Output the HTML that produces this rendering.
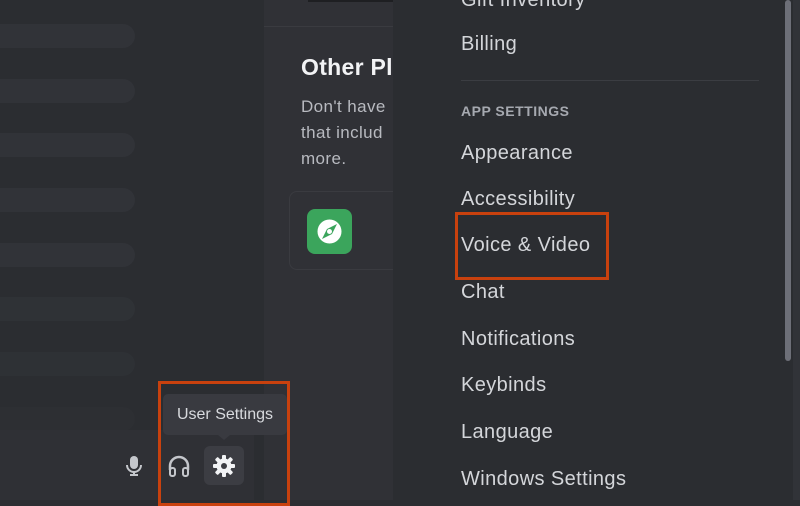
<!DOCTYPE html>
<html><head><style>
*{margin:0;padding:0;box-sizing:border-box}
body{width:800px;height:500px;overflow:hidden;background:#2b2d31;font-family:"Liberation Sans",sans-serif;position:relative}
.a{position:absolute}
.bar{position:absolute;left:-20px;width:155px;height:24px;border-radius:12px;background:#313338}
.mi{position:absolute;left:461px;font-size:20px;color:#d4d6da;line-height:24px;letter-spacing:.4px}
</style></head><body>
<div class="a" style="left:0;top:0;width:264px;height:500px;background:#2b2d31"></div>
<div class="bar" style="top:24px"></div>
<div class="bar" style="top:79px"></div>
<div class="bar" style="top:133px"></div>
<div class="bar" style="top:188px"></div>
<div class="bar" style="top:243px"></div>
<div class="bar" style="top:297px;opacity:.8"></div>
<div class="bar" style="top:352px;opacity:.6"></div>
<div class="bar" style="top:407px;opacity:.4"></div>
<div class="a" style="left:0;top:430px;width:254px;height:70px;background:#2f3035"></div>
<div class="a" style="left:264px;top:0;width:129px;height:500px;background:#303136"></div>
<div class="a" style="left:308px;top:0;width:85px;height:2px;background:#1e1f22"></div>
<div class="a" style="left:264px;top:26px;width:129px;height:1px;background:#3a3b40"></div>
<div class="a" style="left:301px;top:54px;font-size:23px;font-weight:bold;color:#f2f3f5;white-space:nowrap;letter-spacing:.3px">Other Pl</div>
<div class="a" style="left:301px;top:94px;font-size:17px;line-height:26px;color:#b8bac0;white-space:nowrap;letter-spacing:.4px">Don't have<br>that includ<br>more.</div>
<div class="a" style="left:289px;top:191px;width:120px;height:79px;border:1px solid #3a3b40;border-radius:8px"></div>
<div class="a" style="left:307px;top:209px;width:45px;height:45px;border-radius:8px;background:#3ba55c"></div>
<svg class="a" style="left:307px;top:209px" width="45" height="45" viewBox="0 0 45 45"><circle cx="22.5" cy="22.5" r="12" fill="#fff"/><path d="M30 15 L25 25 L15 30 L20 20 Z" fill="#3ba55c"/><circle cx="22.5" cy="22.5" r="2.5" fill="#fff"/></svg>
<div class="a" style="left:393px;top:0;width:400px;height:500px;background:#2b2d31"></div>
<div class="a" style="left:793px;top:0;width:7px;height:500px;background:#313338"></div>
<div class="a" style="left:785px;top:0;width:6px;height:361px;border-radius:3px;background:#6d6f78"></div>
<div class="mi" style="top:-12px">Gift Inventory</div>
<div class="mi" style="top:32px">Billing</div>
<div class="a" style="left:461px;top:80px;width:298px;height:1px;background:#3b3d42"></div>
<div class="a" style="left:461px;top:103px;font-size:14px;font-weight:bold;color:#a6a9b0;letter-spacing:.5px">APP SETTINGS</div>
<div class="mi" style="top:141px">Appearance</div>
<div class="mi" style="top:187px">Accessibility</div>
<div class="mi" style="top:233px">Voice &amp; Video</div>
<div class="mi" style="top:280px">Chat</div>
<div class="mi" style="top:327px">Notifications</div>
<div class="mi" style="top:373px">Keybinds</div>
<div class="mi" style="top:420px">Language</div>
<div class="mi" style="top:467px">Windows Settings</div>
<div class="a" style="left:455px;top:212px;width:154px;height:68px;border:3px solid #c8410e"></div>
<div class="a" style="left:163px;top:394px;width:124px;height:41px;border-radius:5px;background:#393a40;color:#d8dade;font-size:16px;line-height:41px;text-align:center">User Settings</div>
<div class="a" style="left:218px;top:435px;width:0;height:0;border-left:6px solid transparent;border-right:6px solid transparent;border-top:5px solid #393a40"></div>
<div class="a" style="left:204px;top:446px;width:40px;height:39px;border-radius:6px;background:#3c3d43"></div>
<svg class="a" style="left:124px;top:455px" width="20" height="22" viewBox="0 0 20 22"><rect x="6" y="1" width="8" height="13" rx="4" fill="#c4c6cb"/><path d="M3 10a7 7 0 0 0 14 0" stroke="#c4c6cb" stroke-width="2" fill="none"/><path d="M10 17v3M6 20h8" stroke="#c4c6cb" stroke-width="2"/></svg>
<svg class="a" style="left:167px;top:455px" width="24" height="22" viewBox="0 0 24 22"><path d="M3 15V11a9 9 0 0 1 18 0v4" stroke="#c4c6cb" stroke-width="2.5" fill="none"/><rect x="3" y="13" width="5" height="8" rx="2" fill="none" stroke="#c4c6cb" stroke-width="2"/><rect x="16" y="13" width="5" height="8" rx="2" fill="none" stroke="#c4c6cb" stroke-width="2"/></svg>
<svg class="a" style="left:212px;top:454px" width="24" height="24" viewBox="0 0 24 24"><g fill="#f2f3f5"><circle cx="12" cy="12" r="7.5"/><g id="t"><rect x="10" y="1" width="4" height="5" rx="1"/><rect x="10" y="18" width="4" height="5" rx="1"/></g><use href="#t" transform="rotate(45 12 12)"/><use href="#t" transform="rotate(90 12 12)"/><use href="#t" transform="rotate(135 12 12)"/></g><circle cx="12" cy="12" r="3" fill="#3c3d43"/></svg>
<div class="a" style="left:158px;top:381px;width:132px;height:125px;border:3px solid #c8410e"></div>
</body></html>
